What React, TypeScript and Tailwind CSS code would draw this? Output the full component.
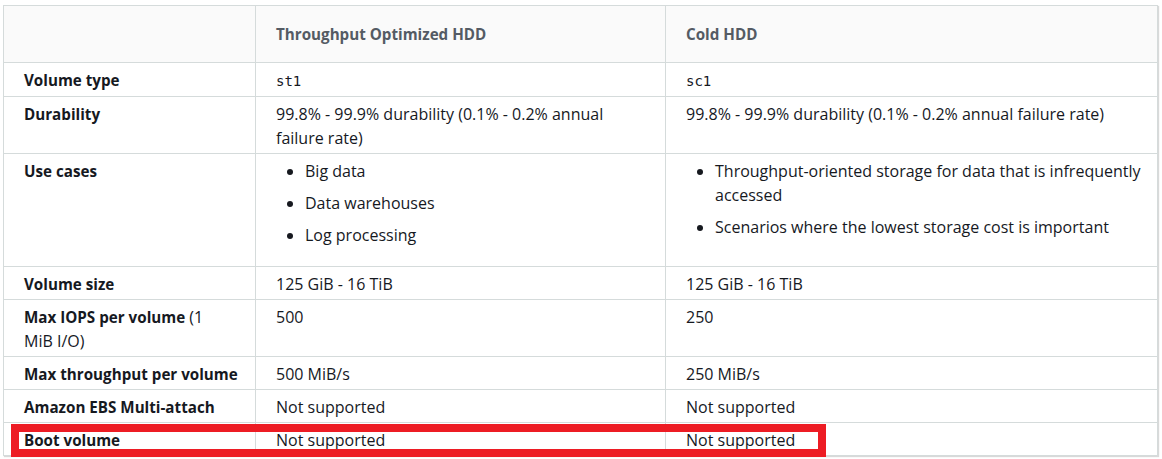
import React from "react";

type Row = {
  label: React.ReactNode;
  st1: React.ReactNode;
  sc1: React.ReactNode;
};

const mono = "font-['DejaVu_Sans_Mono',monospace] text-[14px]";

const rows: Row[] = [
  {
    label: <b className="text-[15.2px]">Volume type</b>,
    st1: <code className={mono}>st1</code>,
    sc1: <code className={mono}>sc1</code>,
  },
  {
    label: <b className="text-[15.2px]">Durability</b>,
    st1: "99.8% - 99.9% durability (0.1% - 0.2% annual failure rate)",
    sc1: "99.8% - 99.9% durability (0.1% - 0.2% annual failure rate)",
  },
  {
    label: <b className="text-[15.2px]">Use cases</b>,
    st1: (
      <ul className="list-disc pl-[29px] mb-4 space-y-2">
        <li>Big data</li>
        <li>Data warehouses</li>
        <li>Log processing</li>
      </ul>
    ),
    sc1: (
      <ul className="list-disc pl-[29px] mb-4 space-y-2">
        <li className="whitespace-nowrap">
          Throughput-oriented storage for data that is infrequently
          <br />
          accessed
        </li>
        <li>Scenarios where the lowest storage cost is important</li>
      </ul>
    ),
  },
  { label: <b className="text-[15.2px]">Volume size</b>, st1: "125 GiB - 16 TiB", sc1: "125 GiB - 16 TiB" },
  {
    label: (
      <>
        <b className="text-[15.2px]">Max IOPS per volume</b> (1 MiB I/O)
      </>
    ),
    st1: "500",
    sc1: "250",
  },
  {
    label: <b className="text-[15.2px] whitespace-nowrap">Max throughput per volume</b>,
    st1: "500 MiB/s",
    sc1: "250 MiB/s",
  },
  { label: <b className="text-[15.2px]">Amazon EBS Multi-attach</b>, st1: "Not supported", sc1: "Not supported" },
  { label: <b className="text-[15.2px]">Boot volume</b>, st1: "Not supported", sc1: "Not supported" },
];

export default function App() {
  return (
    <div className="relative w-[1162px] h-[459px] bg-white pt-[5px] pl-[3px] font-['Open_Sans',sans-serif] text-[16px] leading-6 text-[#16191f]">
      <table className="w-[1154px] border-collapse table-fixed shadow-[1px_1px_1px_rgba(0,0,0,0.15)]">
        <colgroup>
          <col className="w-[252px]" />
          <col className="w-[410px]" />
          <col className="w-[492px]" />
        </colgroup>
        <thead>
          <tr className="bg-[#fafafa]">
            <th className="border border-[#d5dbdb] px-5 py-4 text-left"></th>
            <th className="border border-[#d5dbdb] px-5 py-4 text-left text-[15.2px] font-bold text-[#545b64]">
              Throughput Optimized HDD
            </th>
            <th className="border border-[#d5dbdb] px-5 py-4 text-left text-[15.2px] font-bold text-[#545b64]">
              Cold HDD
            </th>
          </tr>
        </thead>
        <tbody>
          {rows.map((r, i) => (
            <tr key={i}>
              <td className="border border-[#d5dbdb] px-5 pt-[5px] pb-[3px] align-top">{r.label}</td>
              <td className="border border-[#d5dbdb] px-5 pt-[5px] pb-[3px] align-top">{r.st1}</td>
              <td className="border border-[#d5dbdb] px-5 pt-[5px] pb-[3px] align-top">{r.sc1}</td>
            </tr>
          ))}
        </tbody>
      </table>

      {/* highlight around the boot volume row */}
      <div className="absolute left-[11px] top-[424px] w-[815px] h-[33px] border-[8px] border-[#ed1c24]" />
    </div>
  );
}
